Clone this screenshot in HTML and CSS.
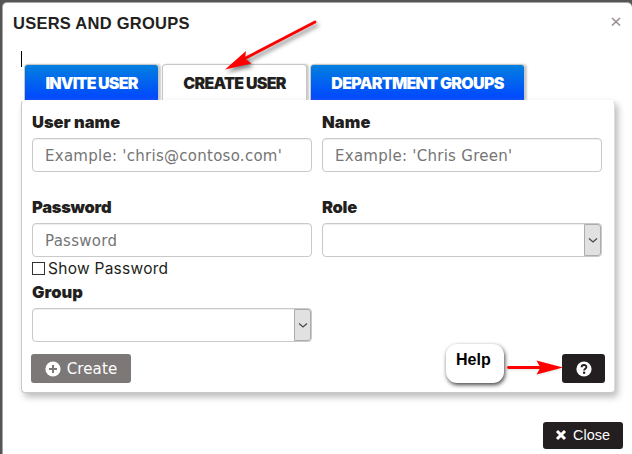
FILE: index.html
```html
<!DOCTYPE html>
<html lang="en">
<head>
<meta charset="utf-8">
<title>Users and Groups</title>
<link rel="stylesheet" href="styles.css">
</head>
<body>
<main class="modal">
  <header class="modal-header">
    <h1><span>USERS AND GROUPS</span></h1>
    <button class="dismiss" aria-label="Dismiss"><svg width="10" height="10" viewBox="0 0 10 10"><path d="M1 1l8 7.500M9 1L1 8.500" stroke="#938a8a" stroke-width="1.500"/></svg></button>
  </header>
  <div class="caret"></div>
  <nav class="tabs">
    <a class="tab tab-invite"><span>INVITE USER</span></a>
    <a class="tab tab-create active"><span>CREATE USER</span></a>
    <a class="tab tab-groups"><span>DEPARTMENT GROUPS</span></a>
  </nav>
  <section class="panel">
    <div class="fields">
      <div class="field"><label class="l-user">User name</label><div class="control"><span class="p-user">Example: 'chris@contoso.com'</span></div></div>
      <div class="field"><label class="l-name">Name</label><div class="control"><span class="p-name">Example: 'Chris Green'</span></div></div>
      <div class="field"><label class="l-pass">Password</label><div class="control"><span class="p-pass">Password</span></div>
        <div class="check"><i class="box"></i><span>Show Password</span></div></div>
      <div class="field"><label class="l-role">Role</label><div class="control select"><i class="drop"><svg width="10" height="7" viewBox="0 0 10 7"><path d="M1 1.500l4 3.500 4-3.500" fill="none" stroke="#484848" stroke-width="1.200"/></svg></i></div></div>
      <div class="field"><label class="l-group">Group</label><div class="control select"><i class="drop"><svg width="10" height="7" viewBox="0 0 10 7"><path d="M1 1.500l4 3.500 4-3.500" fill="none" stroke="#484848" stroke-width="1.200"/></svg></i></div></div>
    </div>
    <div class="actions">
      <button class="btn create"><svg width="16" height="16" viewBox="0 0 16 16"><circle cx="8" cy="8" r="7.600" fill="#fff"/><path d="M8 4v8M4 8h8" stroke="#7c7878" stroke-width="2"/></svg><span>Create</span></button>
      <button class="btn help" aria-label="Help"><svg width="16" height="16" viewBox="0 0 16 16"><circle cx="8" cy="8" r="7.600" fill="#fff"/><path d="M5.600 6.300C5.700 3.400 10.400 3.200 10.400 6.100C10.400 7.800 8.100 7.700 8.100 9.600" fill="none" stroke="#231f20" stroke-width="1.900"/><circle cx="8.100" cy="11.800" r="1.200" fill="#231f20"/></svg></button>
    </div>
  </section>
  <footer class="modal-footer">
    <button class="btn close"><svg width="12" height="12" viewBox="0 0 12 12"><path d="M2 2l8 8M10 2l-8 8" stroke="#fff" stroke-width="3.100"/></svg><span>Close</span></button>
  </footer>
</main>
<div class="callout"><span>Help</span></div>
<svg class="arrows" width="632" height="454" viewBox="0 0 632 454">
  <g class="arrow-long"><path d="M315 22L242 60" stroke="#f00" stroke-width="2.800" stroke-linecap="round"/><path d="M225 69.500L246 51l-1 7.500 6.500 5z" fill="#f00"/></g>
  <g class="arrow-short"><path d="M508.500 367.500H542" stroke="#f00" stroke-width="2.800" stroke-linecap="round"/><path d="M563 367.500L536.500 360.500l4 7-4 7z" fill="#f00"/></g>
</svg>
</body>
</html>
```
FILE: styles.css
```css
* { box-sizing: border-box; }
body { margin: 0; width: 632px; height: 454px; overflow: hidden; background: #555; position: relative; padding: 2px 0 0 2px; }
button { font: inherit; border: 0; margin: 0; padding: 0; }
svg { display: block; flex: none; }
span { white-space: nowrap; }
.modal { height: 460px; background: #fff; border: 1px solid #a5a5a5; border-right: 0; border-radius: 5px; padding: 0 10px 0 10px; }
.modal-header { height: 48px; display: flex; justify-content: space-between; align-items: flex-start; padding-top: 10px; }
h1 { margin: 0; font: bold 16.500px/20px "Liberation Sans", sans-serif; color: #231f20; letter-spacing: .25px; }
.dismiss { background: none; margin: 4px 1px 0 0; }
.caret { width: 1px; height: 16px; background: #000; margin-left: 8px; }
.tabs { display: flex; height: 36px; margin: -3px 0 0 11px; gap: 3px; }
.tab { height: 36px; display: flex; align-items: center; justify-content: center; color: #fff; background: linear-gradient(#0380df, #0045ff); border: 1px solid #c6c6c6; border-bottom: 0; border-radius: 4px 4px 0 0; box-shadow: 2px 0 2px #ccc; font: 900 16px/20px Inter, sans-serif; }
.tab.active { background: #fff; color: #231f20; }
.tab-invite { width: 135px; letter-spacing: -.8px; }
.tab-create { width: 145px; letter-spacing: -.72px; }
.tab-groups { width: 215px; letter-spacing: -.7px; }
.panel { position: relative; width: 594px; height: 293px; margin-left: 8px; background: #fff; border: 1px solid #c9c9c9; border-top-color: #fff; border-right-color: #ddd; border-radius: 4px; box-shadow: 3px 4px 7px #bbb; padding: 10px 9px 0; }
.fields { display: grid; grid-template-columns: 280px 280px; column-gap: 10px; grid-template-rows: 85px 85px 73px; padding-left: 1px; }
label { display: block; height: 27px; color: #231f20; font: 900 16.500px/22px Inter, sans-serif; letter-spacing: 0; }
.l-name { letter-spacing: .15px; }
.l-pass { letter-spacing: -.28px; }
.l-role { letter-spacing: -.3px; }
.l-group { letter-spacing: .05px; }
.control { height: 34px; border: 1px solid #c9c9c9; border-radius: 4px; padding: 2px 12px 0; display: flex; align-items: center; font: 15px/20px "DejaVu Sans", sans-serif; color: #757575; box-shadow: inset 0 1px 1px #eee; letter-spacing: .27px; }
.control.select { padding: 0; justify-content: flex-end; }
.drop { width: 17px; height: 32px; background: #e1e1e1; border: 1px solid #adadad; border-radius: 0 3px 3px 0; display: flex; align-items: center; justify-content: center; }
.check { display: flex; align-items: center; height: 22px; gap: 3px; font: 15.500px/22px Inter, sans-serif; color: #231f20; letter-spacing: .26px; }
.check span { padding-top: 1px; }
.box { width: 13px; height: 13px; border: 1px solid #333; }
.actions { display: flex; justify-content: space-between; width: 574px; }
.btn { display: flex; align-items: center; justify-content: center; color: #fff; background: #231f20; border-radius: 3px; }
.create { width: 100px; height: 29px; background: #7c7878; gap: 6px; font: 15px/20px "DejaVu Sans", sans-serif; letter-spacing: .1px; }
.help { width: 43px; height: 29px; }
.modal-footer { display: flex; justify-content: flex-end; padding-top: 29px; }
.close { width: 80px; height: 27px; gap: 6px; font: 14.400px/20px "Liberation Sans", sans-serif; margin-right: -1px; padding: 0 1px 1px 0; }
.callout { position: absolute; left: 446px; top: 344px; width: 58px; height: 39px; background: #fff; border-radius: 11px; box-shadow: 1px 2px 4px #444; font: bold 16px/20px "Liberation Sans", sans-serif; color: #000; padding: 6px 10px; }
.arrows { position: absolute; left: 0; top: 0; }
.arrow-long { filter: drop-shadow(2px 3px 2px rgba(0,0,0,.5)); }
.arrow-short { filter: drop-shadow(0 1px 1px rgba(0,0,0,.12)); }
```
